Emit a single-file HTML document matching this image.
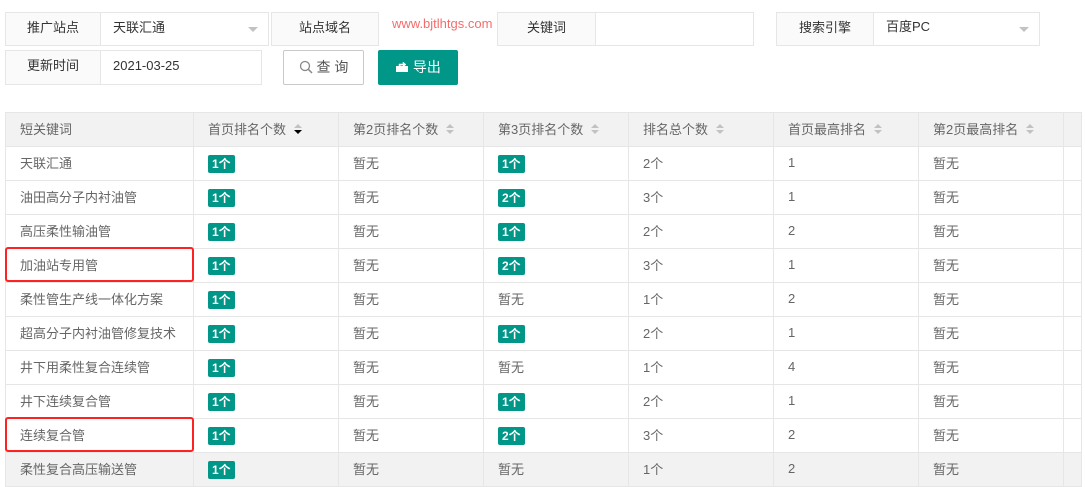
<!DOCTYPE html>
<html><head><meta charset="utf-8"><style>
*{box-sizing:border-box;margin:0;padding:0}
body{width:1085px;height:487px;background:#fff;font-family:"Liberation Sans","Noto Sans CJK SC",sans-serif;font-size:13px;color:#333;position:relative;overflow:hidden}
.a{position:absolute}
.lab{position:absolute;border:1px solid #e6e6e6;background:#fafafa;text-align:center;line-height:30px;font-size:13px;color:#333}
.val{position:absolute;border:1px solid #e6e6e6;border-left:none;background:#fff;line-height:29px;padding-left:12px;color:#333}
.caret{position:absolute;right:10px;top:14px;width:0;height:0;border-left:5px solid transparent;border-right:5px solid transparent;border-top:5px solid #c2c2c2}
table{position:absolute;left:5px;top:112px;border-collapse:collapse;table-layout:fixed;width:1076px}
td,th{border:1px solid #e6e6e6;height:34px;padding:0 14px 3px;text-align:left;font-weight:normal;color:#666;white-space:nowrap;overflow:hidden}
th{background:#f2f2f2}
.b{display:inline-block;background:#009688;color:#fff;font-size:12px;font-weight:bold;line-height:18px;padding:0 4px;border-radius:2px;vertical-align:middle;margin-top:3px}
.s{display:inline-block;vertical-align:middle;margin-left:8px;width:8px;height:12px;position:relative}
.s:before{content:"";position:absolute;left:0;top:0;border-left:4px solid transparent;border-right:4px solid transparent;border-bottom:4px solid #c2c2c2}
.s:after{content:"";position:absolute;left:0;top:6px;border-left:4px solid transparent;border-right:4px solid transparent;border-top:4px solid #c2c2c2}
.s.d:after{border-top-color:#000}
tr.h td{background:#f2f2f2}
.red{position:absolute;border:2px solid #f22;border-radius:3px;left:5px;width:189px;height:35px}
</style></head><body>
<div class="lab" style="left:5px;top:12px;width:96px;height:34px">推广站点</div>
<div class="val" style="left:101px;top:12px;width:168px;height:34px">天联汇通<span class="caret"></span></div>
<div class="lab" style="left:271px;top:12px;width:108px;height:34px">站点域名</div>
<div class="a" style="left:392px;top:16px;color:#f56c6c;font-size:13px">www.bjtlhtgs.com</div>
<div class="lab" style="left:497px;top:12px;width:99px;height:34px">关键词</div>
<div class="val" style="left:596px;top:12px;width:158px;height:34px"></div>
<div class="lab" style="left:776px;top:12px;width:98px;height:34px">搜索引擎</div>
<div class="val" style="left:874px;top:12px;width:166px;height:34px;line-height:28px">百度PC<span class="caret"></span></div>
<div class="lab" style="left:5px;top:50px;width:96px;height:35px">更新时间</div>
<div class="val" style="left:101px;top:50px;width:161px;height:35px;line-height:30px">2021-03-25</div>
<div class="a" style="left:283px;top:50px;width:81px;height:35px;border:1px solid #c9c9c9;border-radius:2px;text-align:center;line-height:33px;color:#555;font-size:14px"><svg width="14" height="14" viewBox="0 0 14 14" style="vertical-align:-2px"><circle cx="6" cy="6" r="4.5" fill="none" stroke="#888" stroke-width="1.3"/><path d="M9.3 9.3L13 13" stroke="#888" stroke-width="1.5"/></svg> 查 询</div>
<div class="a" style="left:378px;top:50px;width:80px;height:35px;background:#009688;border-radius:2px;text-align:center;line-height:35px;color:#fff;font-size:14px"><svg width="14" height="13" viewBox="0 0 14 13" style="vertical-align:-1px"><path d="M1 6h12v6H1z" fill="#fff"/><path d="M4 6V4h4V2l3 2.5L8 7V5" fill="#fff" stroke="#fff" stroke-width=".5"/></svg> 导出</div>
<table>
<colgroup><col style="width:188px"><col style="width:145px"><col style="width:145px"><col style="width:145px"><col style="width:145px"><col style="width:145px"><col style="width:145px"><col style="width:18px"></colgroup>
<tr><th>短关键词</th><th>首页排名个数<span class="s d"></span></th><th>第2页排名个数<span class="s"></span></th><th>第3页排名个数<span class="s"></span></th><th>排名总个数<span class="s"></span></th><th>首页最高排名<span class="s"></span></th><th>第2页最高排名<span class="s"></span></th><th></th></tr>
<tr><td>天联汇通</td><td><span class="b">1个</span></td><td>暂无</td><td><span class="b">1个</span></td><td>2个</td><td>1</td><td>暂无</td><td></td></tr>
<tr><td>油田高分子内衬油管</td><td><span class="b">1个</span></td><td>暂无</td><td><span class="b">2个</span></td><td>3个</td><td>1</td><td>暂无</td><td></td></tr>
<tr><td>高压柔性输油管</td><td><span class="b">1个</span></td><td>暂无</td><td><span class="b">1个</span></td><td>2个</td><td>2</td><td>暂无</td><td></td></tr>
<tr><td>加油站专用管</td><td><span class="b">1个</span></td><td>暂无</td><td><span class="b">2个</span></td><td>3个</td><td>1</td><td>暂无</td><td></td></tr>
<tr><td>柔性管生产线一体化方案</td><td><span class="b">1个</span></td><td>暂无</td><td>暂无</td><td>1个</td><td>2</td><td>暂无</td><td></td></tr>
<tr><td>超高分子内衬油管修复技术</td><td><span class="b">1个</span></td><td>暂无</td><td><span class="b">1个</span></td><td>2个</td><td>1</td><td>暂无</td><td></td></tr>
<tr><td>井下用柔性复合连续管</td><td><span class="b">1个</span></td><td>暂无</td><td>暂无</td><td>1个</td><td>4</td><td>暂无</td><td></td></tr>
<tr><td>井下连续复合管</td><td><span class="b">1个</span></td><td>暂无</td><td><span class="b">1个</span></td><td>2个</td><td>1</td><td>暂无</td><td></td></tr>
<tr><td>连续复合管</td><td><span class="b">1个</span></td><td>暂无</td><td><span class="b">2个</span></td><td>3个</td><td>2</td><td>暂无</td><td></td></tr>
<tr class="h"><td>柔性复合高压输送管</td><td><span class="b">1个</span></td><td>暂无</td><td>暂无</td><td>1个</td><td>2</td><td>暂无</td><td></td></tr>
</table>
<div class="red" style="top:247px"></div>
<div class="red" style="top:417px"></div>
</body></html>
